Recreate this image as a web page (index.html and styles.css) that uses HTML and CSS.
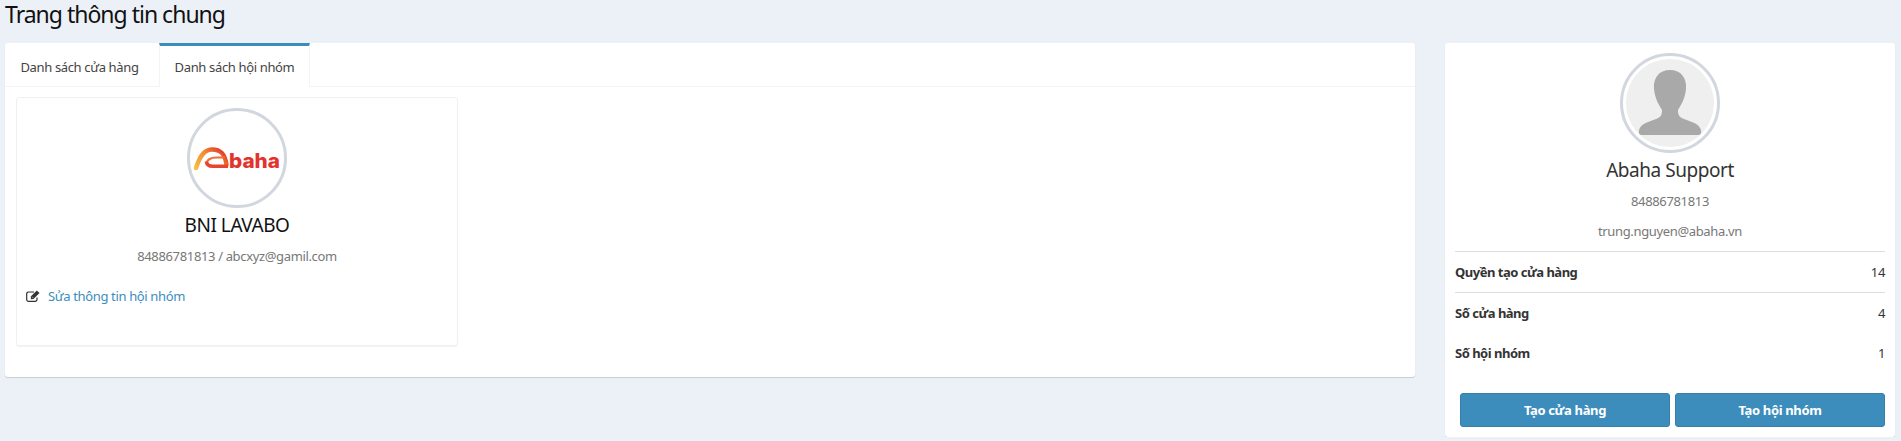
FILE: index.html
```html
<!DOCTYPE html>
<html lang="vi">
<head>
    <meta charset="UTF-8">
    <meta name="viewport" content="width=device-width, initial-scale=1.0">
    <title>Trang thông tin chung</title>
    <link rel="stylesheet" href="styles.css">
</head>
<body>
    <h1 class="page-title">Trang thông tin chung</h1>
    <div class="content">
        <div class="tab-box">
            <ul class="tabs">
                <li class="tab">Danh sách cửa hàng</li>
                <li class="tab active">Danh sách hội nhóm</li>
            </ul>
            <div class="tab-body">
                <div class="group-card">
                    <div class="avatar">
                        <svg class="logo" viewBox="0 -4 90 34" width="90" height="34">
                            <defs>
                                <linearGradient id="swoosh" x1="0" y1="1" x2="1" y2="0.3">
                                    <stop offset="0" stop-color="#f7bd45"/>
                                    <stop offset="0.6" stop-color="#f08a32"/>
                                    <stop offset="1" stop-color="#e6402c"/>
                                </linearGradient>
                            </defs>
                            <path d="M4 23 C7 14 11 4.500 20 4.500 C28 4.500 33 8 34.500 20" fill="none" stroke="url(#swoosh)" stroke-width="4.500" stroke-linecap="round"/>
                            <path d="M33 12.500 H24 C19 12.500 15 15 15 17.500" fill="none" stroke="#ee7030" stroke-width="2.200"/>
                            <path d="M14.500 16.500 C14.500 20 17 21.300 21 21.300 H36" fill="none" stroke="#e8452c" stroke-width="3.600"/>
                            <text class="logo-text" x="37" y="23" textLength="51" lengthAdjust="spacingAndGlyphs">baha</text>
                        </svg>
                    </div>
                    <h3 class="card-name">BNI LAVABO</h3>
                    <p class="card-sub">84886781813 / abcxyz@gamil.com</p>
                    <div class="card-link">
                        <svg class="edit-icon" viewBox="0 0 14 12" width="14" height="12">
                            <path d="M11 7.500 V9.500 A1.800 1.800 0 0 1 9.200 11.300 H2.500 A1.800 1.800 0 0 1 0.700 9.500 V3.800 A1.800 1.800 0 0 1 2.500 2 H8" fill="none" stroke="#333" stroke-width="1.200"/>
                            <path d="M5 6.300 L10.800 0.500 L13.500 3 L7.500 8.900 L4.800 9.200 Z" fill="#333"/>
                            <path d="M5.900 6.600 L7.200 7.900" stroke="#fff" stroke-width="0.600"/>
                        </svg>
                        <a href="#">Sửa thông tin hội nhóm</a>
                    </div>
                </div>
            </div>
        </div>
        <aside class="profile-box">
            <div class="avatar">
                <svg class="user-pic" viewBox="0 0 88 88" width="88" height="88">
                    <rect width="88" height="88" fill="#efefef"/>
                    <path d="M44 11 C33 11 27 19 28 30 C29 40 33 46 36 51 C36 56 35 58 30 60 C23 63 15 64 13 71 Q12 76 16 76 H72 Q76 76 75 71 C73 64 65 63 58 60 C53 58 52 56 52 51 C55 46 59 40 60 30 C61 19 55 11 44 11 Z" fill="#a9a9a9"/>
                </svg>
            </div>
            <h3 class="profile-name">Abaha Support</h3>
            <p class="profile-sub">84886781813</p>
            <p class="profile-sub">trung.nguyen@abaha.vn</p>
            <ul class="stats">
                <li class="stat-row"><b>Quyền tạo cửa hàng</b><span>14</span></li>
                <li class="stat-row"><b>Số cửa hàng</b><span>4</span></li>
                <li class="stat-row plain"><b>Số hội nhóm</b><span>1</span></li>
            </ul>
            <div class="actions">
                <button class="btn">Tạo cửa hàng</button>
                <button class="btn">Tạo hội nhóm</button>
            </div>
        </aside>
    </div>
</body>
</html>
```

FILE: styles.css
```css
* {
    box-sizing: border-box;
}

body {
    font-family: "Noto Sans", Arial, sans-serif;
    font-size: 13px;
    letter-spacing: -0.35px;
    background-color: #ecf0f7;
    color: #333;
    margin: 0;
}

.page-title {
    font-size: 23px;
    font-weight: 400;
    line-height: 28px;
    color: #111;
    margin: 0 0 15px;
    padding-left: 5px;
    letter-spacing: -1px;
}

.content {
    display: flex;
    align-items: flex-start;
    gap: 30px;
    padding: 0 6px 0 5px;
}

.tab-box {
    width: 1410px;
    height: 334px;
    background: #fff;
    border-radius: 3px;
    box-shadow: 0 1px 1px rgba(0, 0, 0, 0.15);
}

.tabs {
    display: flex;
    gap: 5px;
    list-style: none;
    margin: 0;
    padding: 0;
    height: 44px;
    border-bottom: 1px solid #f4f4f4;
}

.tab {
    width: 149px;
    padding-top: 12px;
    text-align: center;
    color: #444;
    border-top: 3px solid transparent;
}

.tab.active {
    width: 151px;
    border-top-color: #3c8dbc;
    border-right: 1px solid #f4f4f4;
    border-left: 1px solid #f4f4f4;
    height: 44px;
    background: #fff;
}

.tab-body {
    padding: 10px 11px;
}

.group-card {
    width: 442px;
    height: 249px;
    padding: 10px;
    border: 1px solid #f0f0f0;
    border-radius: 3px;
    box-shadow: 0 1px 1px rgba(0, 0, 0, 0.05);
    text-align: center;
}

.avatar {
    width: 100px;
    height: 100px;
    margin: 0 auto;
    padding: 3px;
    border: 3px solid #d2d6de;
    border-radius: 50%;
    overflow: hidden;
    display: flex;
    align-items: center;
    justify-content: center;
}

.logo {
    flex-shrink: 0;
}

.logo-text {
    font-family: Inter, sans-serif;
    font-size: 20px;
    font-weight: 800;
    fill: #e2332c;
    letter-spacing: 0;
}

.user-pic {
    flex-shrink: 0;
    border-radius: 50%;
}

.card-name,
.profile-name {
    font-size: 19px;
    font-weight: 400;
    line-height: 24px;
    color: #111;
    margin: 5px 0 0;
    letter-spacing: -0.45px;
}

.card-sub {
    color: #777;
    line-height: 20px;
    margin: 9px 0 0;
}

.card-link {
    display: flex;
    align-items: center;
    gap: 8px;
    margin: 20px 0 0 -1px;
    text-align: left;
    line-height: 20px;
}

.card-link a {
    color: #3c8dbc;
    text-decoration: none;
}

.profile-box {
    width: 450px;
    height: 394px;
    padding: 10px;
    background: #fff;
    border-radius: 3px;
    box-shadow: 0 1px 1px rgba(0, 0, 0, 0.15);
    text-align: center;
}

.profile-name {
    color: #333;
}

.profile-sub {
    color: #777;
    line-height: 20px;
    margin: 10px 0 0;
}

.profile-name + .profile-sub {
    margin-top: 9px;
}

.stats {
    list-style: none;
    margin: 10px 0 0;
    padding: 0;
    border-top: 1px solid #ddd;
}

.stat-row {
    display: flex;
    justify-content: space-between;
    height: 41px;
    line-height: 40px;
    border-bottom: 1px solid #ddd;
}

.stat-row:nth-child(2),
.stat-row.plain {
    border-bottom: none;
    height: 40px;
}

.stat-row b {
    font-weight: 700;
    letter-spacing: -0.5px;
}

.actions {
    display: flex;
    gap: 5px;
    margin-top: 20px;
    padding-left: 5px;
}

.btn {
    flex: 1;
    height: 34px;
    font-family: inherit;
    font-size: 13px;
    font-weight: 700;
    letter-spacing: -0.35px;
    color: #fff;
    background-color: #3c8dbc;
    border: 1px solid #367fa9;
    border-radius: 3px;
}
```
